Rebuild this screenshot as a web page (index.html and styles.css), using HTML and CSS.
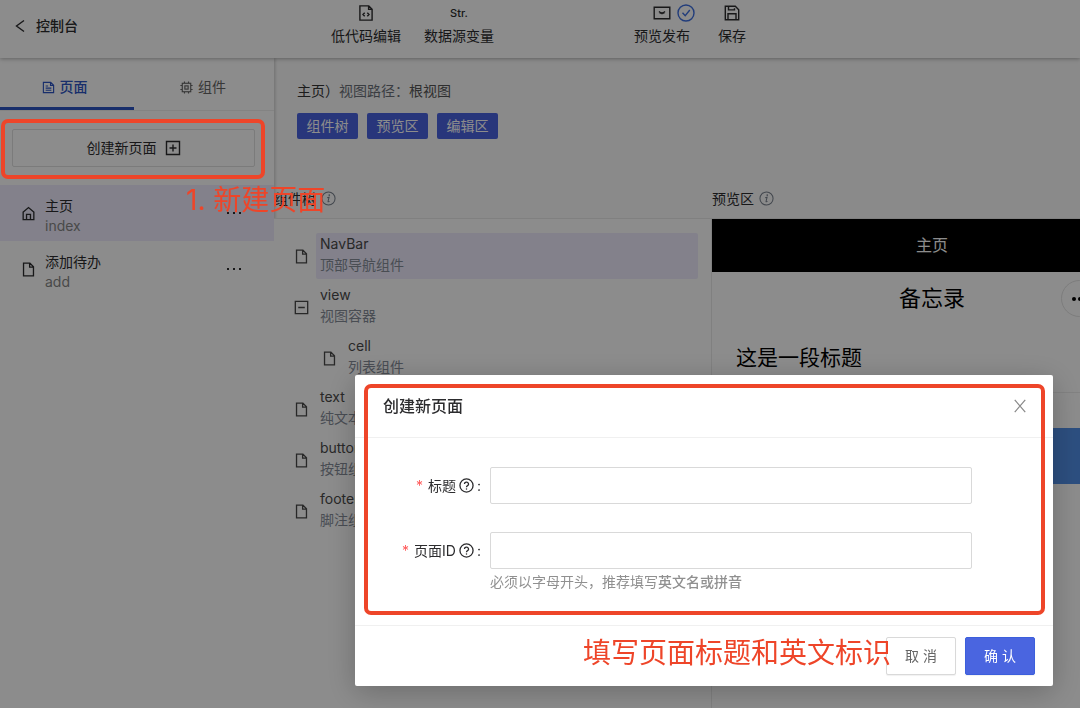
FILE: index.html
```html
<!DOCTYPE html>
<html lang="zh-CN">
<head>
<meta charset="utf-8">
<title>低代码编辑</title>
<link rel="stylesheet" href="styles.css">
</head>
<body>
<svg class="sprite" aria-hidden="true">
  <symbol id="i-file" viewBox="0 0 16 16"><path d="M2.7 1.2h6.8l3.8 3.9v9.7H2.7zM9.2 1.4v4h4"/></symbol>
  <symbol id="i-home" viewBox="0 0 16 16"><path d="M1.8 7 8 1.7 14.2 7M2.3 6.6v8h11.4v-8M5.9 14.4V9h4.2v5.4"/></symbol>
  <symbol id="i-info" viewBox="0 0 16 16"><circle cx="8" cy="8" r="7"/><path d="M6.6 7.2 8.6 6.6 7.5 11.2q0 .8 1.6-.1"/><circle class="dot" cx="8.8" cy="4.3" r=".9"/></symbol>
  <symbol id="i-help" viewBox="0 0 16 16"><circle cx="8" cy="8" r="7"/><path d="M5.8 6.5a2.2 2 0 1 1 3.3 1.7Q8 8.8 8 9.9"/><circle class="dot" cx="8" cy="11.8" r=".8"/></symbol>
</svg>

<header class="topbar">
  <button class="back"><svg class="icon" viewBox="0 0 16 16"><path d="M12 2.5 4.5 8l7.5 5.5"/></svg>控制台</button>
  <nav class="tools">
    <button class="tool">
      <span class="tool-icon"><svg class="icon" viewBox="0 0 16 16"><path d="M1.9.9h8.9l3.3 3.3v10.9H1.9zM10.6 1v3.4H14M6.7 7.7 5 9.5l1.7 1.8M9.3 7.7 11 9.5l-1.7 1.8"/></svg></span>低代码编辑
    </button>
    <button class="tool"><span class="tool-icon tool-str">Str.</span>数据源变量</button>
  </nav>
  <nav class="tools tools-wide">
    <button class="tool">
      <span class="tool-icon">
        <svg class="icon icon-wide" viewBox="0 0 18 16"><path d="M1.2 2.3h15.6v11.5H1.2zM6 6.6q3 2.9 6 0M7.3 7.2v1.6M9 7.8v1.5M10.7 7.2v1.6"/></svg>
        <svg class="icon icon-ok" viewBox="0 0 18 18"><circle cx="9" cy="9" r="8"/><path d="m5.5 8.7 2.7 3L12.8 6"/></svg>
      </span>预览发布
    </button>
    <button class="tool">
      <span class="tool-icon"><svg class="icon" viewBox="0 0 16 16"><path d="M1.3 1.3h10l3.4 3.4v10H1.3zM4.5 1.4v3.5h6V3.2M4 14.5V8.8h8v5.7"/></svg></span>保存
    </button>
  </nav>
</header>

<div class="layout">
  <aside class="sidebar">
    <div class="tabs">
      <button class="tab tab-active"><svg class="icon icon-sm" viewBox="0 0 16 16"><path d="M1.7 1.7h9l3.6 3.4v9.2H1.7zM10.5 1.9v3.4h3.6M4.5 6.2h3M4.5 8.8h7M4.5 11.4h7"/></svg>页面</button>
      <button class="tab"><svg class="icon icon-sm" viewBox="0 0 16 16"><rect x="2.8" y="2.8" width="10.4" height="10.4"/><rect x="6" y="6" width="4" height="4"/><path d="M5.5.5v2M10.5.5v2M5.5 13.5v2M10.5 13.5v2M.5 5.5h2M.5 10.5h2M13.5 5.5h2M13.5 10.5h2"/></svg>组件</button>
    </div>
    <div class="create">
      <button class="create-btn">创建新页面<svg class="icon" viewBox="0 0 16 16"><path d="M1.5 1.5h13v13h-13zM8 4.5v7M4.5 8h7"/></svg></button>
      <div class="mark mark-create"></div>
      <div class="note note-create">1. 新建页面</div>
    </div>
    <ul class="pages">
      <li class="page page-active">
        <svg class="icon icon-page"><use href="#i-home"/></svg>
        <div class="page-text"><span>主页</span><span class="page-id">index</span></div>
        <button class="more" aria-label="更多"><i></i><i></i><i></i></button>
      </li>
      <li class="page">
        <svg class="icon icon-page"><use href="#i-file"/></svg>
        <div class="page-text"><span>添加待办</span><span class="page-id">add</span></div>
        <button class="more" aria-label="更多"><i></i><i></i><i></i></button>
      </li>
    </ul>
  </aside>

  <main class="main">
    <section class="intro">
      <p class="path"><span class="path-page">主页）</span>视图路径：<span class="path-view">根视图</span></p>
      <div class="chips"><button class="chip">组件树</button><button class="chip">预览区</button><button class="chip">编辑区</button></div>
    </section>
    <div class="panels">
      <section class="panel">
        <h2 class="panel-title">组件树<svg class="icon icon-info"><use href="#i-info"/></svg></h2>
        <ul class="tree">
          <li class="node"><svg class="icon icon-node"><use href="#i-file"/></svg><div class="node-text node-active"><span>NavBar</span><span class="node-desc">顶部导航组件</span></div></li>
          <li class="node"><svg class="icon icon-node" viewBox="0 0 16 16"><path d="M1.4 1.4h13.2v13.2H1.4zM4.5 8h7"/></svg><div class="node-text"><span>view</span><span class="node-desc">视图容器</span></div></li>
          <li class="node node-child"><svg class="icon icon-node"><use href="#i-file"/></svg><div class="node-text"><span>cell</span><span class="node-desc">列表组件</span></div></li>
          <li class="node"><svg class="icon icon-node"><use href="#i-file"/></svg><div class="node-text"><span>text</span><span class="node-desc">纯文本</span></div></li>
          <li class="node"><svg class="icon icon-node"><use href="#i-file"/></svg><div class="node-text"><span>button</span><span class="node-desc">按钮组件</span></div></li>
          <li class="node"><svg class="icon icon-node"><use href="#i-file"/></svg><div class="node-text"><span>footer</span><span class="node-desc">脚注组件</span></div></li>
        </ul>
      </section>
      <section class="panel">
        <h2 class="panel-title">预览区<svg class="icon icon-info"><use href="#i-info"/></svg></h2>
        <div class="phone">
          <div class="phone-nav">主页</div>
          <div class="phone-head">备忘录<div class="capsule"><i></i><i></i><i></i></div></div>
          <div class="phone-cell">这是一段标题</div>
          <div class="phone-text"></div>
          <div class="phone-block"></div>
        </div>
      </section>
    </div>
  </main>
</div>

<div class="mask">
  <form class="modal" role="dialog" aria-labelledby="dialog-title">
    <div class="modal-head">
      <h1 class="modal-title" id="dialog-title">创建新页面</h1>
      <button class="close" type="button" aria-label="关闭"><svg class="icon icon-close" viewBox="0 0 16 16"><path d="m2 1 12 14M14 1 2 15"/></svg></button>
    </div>
    <div class="modal-body">
      <div class="field">
        <label class="label" for="title"><span class="star">*</span>标题<svg class="icon icon-help"><use href="#i-help"/></svg><span>:</span></label>
        <input class="input" id="title" type="text">
      </div>
      <div class="field">
        <label class="label" for="page-id"><span class="star">*</span>页面ID<svg class="icon icon-help"><use href="#i-help"/></svg><span>:</span></label>
        <input class="input" id="page-id" type="text">
        <p class="hint">必须以字母开头，推荐填写<strong>英文名或拼音</strong></p>
      </div>
    </div>
    <div class="modal-foot">
      <button class="btn" type="button">取 消</button>
      <button class="btn btn-primary" type="button">确 认</button>
      <div class="note note-form">填写页面标题和英文标识</div>
    </div>
    <div class="mark mark-form"></div>
  </form>
</div>
</body>
</html>
```
FILE: styles.css
```css
* { box-sizing: border-box; }
html, body { height: 100%; }
body {
  margin: 0;
  display: flex;
  flex-direction: column;
  overflow: hidden;
  background: #fbfbfb;
  color: #2c2c2e;
  font: 14px/20px Inter, "Noto Sans CJK SC", sans-serif;
}
button { font: inherit; color: inherit; background: none; border: 0; padding: 0; }
h1, h2, p, ul { margin: 0; padding: 0; font-size: inherit; font-weight: 400; }
ul { list-style: none; }
.sprite { position: absolute; width: 0; height: 0; }
.dot { fill: currentColor; stroke: none; }
.icon {
  width: 16px; height: 16px; flex: none;
  fill: none; stroke: currentColor; stroke-width: 1.4;
}
.icon-sm { width: 13px; height: 13px; }
.icon-wide { width: 18px; }
.icon-ok { position: absolute; left: 24px; top: 1px; width: 18px; height: 18px; color: #3f70e0; }
.icon-page, .icon-node { width: 15px; height: 15px; }
.icon-info, .icon-help { width: 15px; height: 15px; }
.icon-info { color: #79818d; stroke-width: 1.1; }
.icon-close { width: 14px; height: 14px; }

.topbar {
  display: grid;
  grid-template-columns: 331px 303px 1fr;
  height: 58px;
  flex: none;
  background: #fff;
  box-shadow: 0 1px 4px rgba(0, 0, 0, .3);
  position: relative;
}
.back { display: flex; align-items: center; gap: 8px; padding: 0 12px 6px; font-weight: 500; }
.tools { display: flex; gap: 23px; }
.tools-wide { gap: 28px; }
.tool { display: flex; flex-direction: column; align-items: center; justify-content: flex-start; gap: 3px; padding-top: 3px; }
.tool-icon { position: relative; display: flex; align-items: center; height: 20px; }
.tool-str { font-size: 11px; font-weight: 500; }

.layout { display: flex; flex: 1; min-height: 0; }
.sidebar { width: 274px; flex: none; background: #fff; box-shadow: 1px 0 3px rgba(0, 0, 0, .2); }
.tabs { display: grid; grid-template-columns: 134px 1fr; height: 53px; border-bottom: 1px solid #eee; }
.tab { display: flex; align-items: center; justify-content: center; gap: 5px; padding: 6px 2px 0 0; color: #666; }
.tab-active { padding: 9px 5px 0 0; color: #2c55c4; font-weight: 500; border-bottom: 3px solid #2c55c4; }
.create { position: relative; padding: 18px 19px 18px 12px; }
.create-btn {
  display: flex; align-items: center; justify-content: center; gap: 8px;
  width: 100%; height: 38px;
  border: 1px solid #e0e0e0; border-radius: 2px; background: #fff;
}
.mark { position: absolute; border: 4px solid #ee4529; border-radius: 7px; z-index: 20; pointer-events: none; }
.mark-create { inset: 8px 9px 6px 1px; }
.note { position: absolute; z-index: 20; color: #ee4529; font-size: 28px; line-height: 36px; white-space: nowrap; }
.note-create { left: 186px; top: 71px; }

.page { display: flex; align-items: center; height: 56px; padding: 0 33px 0 21px; gap: 9px; }
.page-active { background: #eeecfd; }
.page-text { display: flex; flex-direction: column; flex: 1; padding-top: 5px; }
.page-id { color: #868686; }
.more, .capsule { display: flex; gap: 4px; align-items: center; }
.more i { width: 2px; height: 2px; background: #2c2c2e; }

.main { flex: 1; min-width: 0; display: flex; flex-direction: column; overflow: visible; }
.intro { height: 121px; padding: 23px 23px 0; }
.path { color: #6b7078; }
.path-page { color: #333; }
.path-view { color: #555; }
.chips { display: flex; gap: 9px; padding-top: 12px; }
.chip { height: 26px; width: 61px; border-radius: 2px; background: #4a63e0; color: #fff; }
.panels { display: grid; grid-template-columns: 438px 440px; flex: 1; }
.panel { display: flex; flex-direction: column; }
.panel-title { display: flex; align-items: center; gap: 5px; height: 40px; border-bottom: 1px solid #eaeaea; }
.tree { display: flex; flex-direction: column; gap: 5px; flex: 1; padding: 14px 13px 14px 20px; background: #fff; border-right: 1px solid #eaeaea; }
.node { display: flex; align-items: center; gap: 7px; color: #4a4a4a; }
.node-child { padding-left: 28px; }
.node-text { display: flex; flex-direction: column; flex: 1; height: 46px; padding: 0 4px; line-height: 21px; border-radius: 2px; }
.node-active { background: #eeecfd; }
.node-desc { color: #858c98; }

.phone { flex: 1; background: #fff; color: #000; }
.phone-nav { height: 53px; line-height: 53px; text-align: center; font-size: 16px; background: #000; color: #fff; }
.phone-head { position: relative; height: 52px; line-height: 52px; text-align: center; font-size: 22px; }
.capsule { position: absolute; right: 11px; top: 8px; width: 80px; height: 37px; padding-left: 10px; border: 1px solid #e3e3e3; border-radius: 19px; gap: 2px; }
.capsule i { width: 4px; height: 4px; border-radius: 2px; background: #000; }
.phone-cell { height: 69px; line-height: 68px; padding-left: 24px; font-size: 21px; border-bottom: 1px solid #ededed; }
.phone-text { height: 35px; }
.phone-block { height: 56px; background: #5290e9; }

.mask {
  position: fixed; inset: 0; z-index: 10;
  display: flex; align-items: flex-start;
  padding: 375px 27px 0 355px;
  background: rgba(0, 0, 0, .45);
}
.modal { position: relative; flex: 1; background: #fff; border-radius: 2px; box-shadow: 0 6px 30px rgba(0, 0, 0, .24); }
.modal-head { display: flex; align-items: center; justify-content: space-between; height: 63px; padding: 0 26px 0 28px; border-bottom: 1px solid #f0f0f0; }
.modal-title { font-size: 16px; font-weight: 500; }
.close { display: flex; color: #888; }
.modal-body { display: grid; gap: 28px; padding: 29px 81px 30px 0; }
.field { display: grid; grid-template-columns: 126px 1fr; column-gap: 9px; }
.label { display: flex; align-items: center; justify-content: flex-end; }
.star { color: #ff5a5a; margin-right: 5px; }
.icon-help { margin: 0 3px; }
.input { width: 100%; height: 37px; padding: 4px 11px; border: 1px solid #d9d9d9; border-radius: 2px; background: #fff; font: inherit; }
.hint { grid-column: 2; line-height: 26px; color: #909090; }
.hint strong { font-weight: 500; }
.modal-foot { position: relative; display: flex; align-items: center; justify-content: flex-end; gap: 9px; height: 61px; padding: 0 18px; border-top: 1px solid #f0f0f0; }
.btn { width: 70px; height: 38px; border: 1px solid #d9d9d9; border-radius: 2px; background: #fff; color: #666; box-shadow: 0 1px 1px rgba(0, 0, 0, .06); }
.btn-primary { background: #4a65e0; border-color: #3c5fdc; color: #fff; }
.note-form { right: 162px; top: 9px; }
.mark-form { inset: 9px 8px 71px 9px; }
```
